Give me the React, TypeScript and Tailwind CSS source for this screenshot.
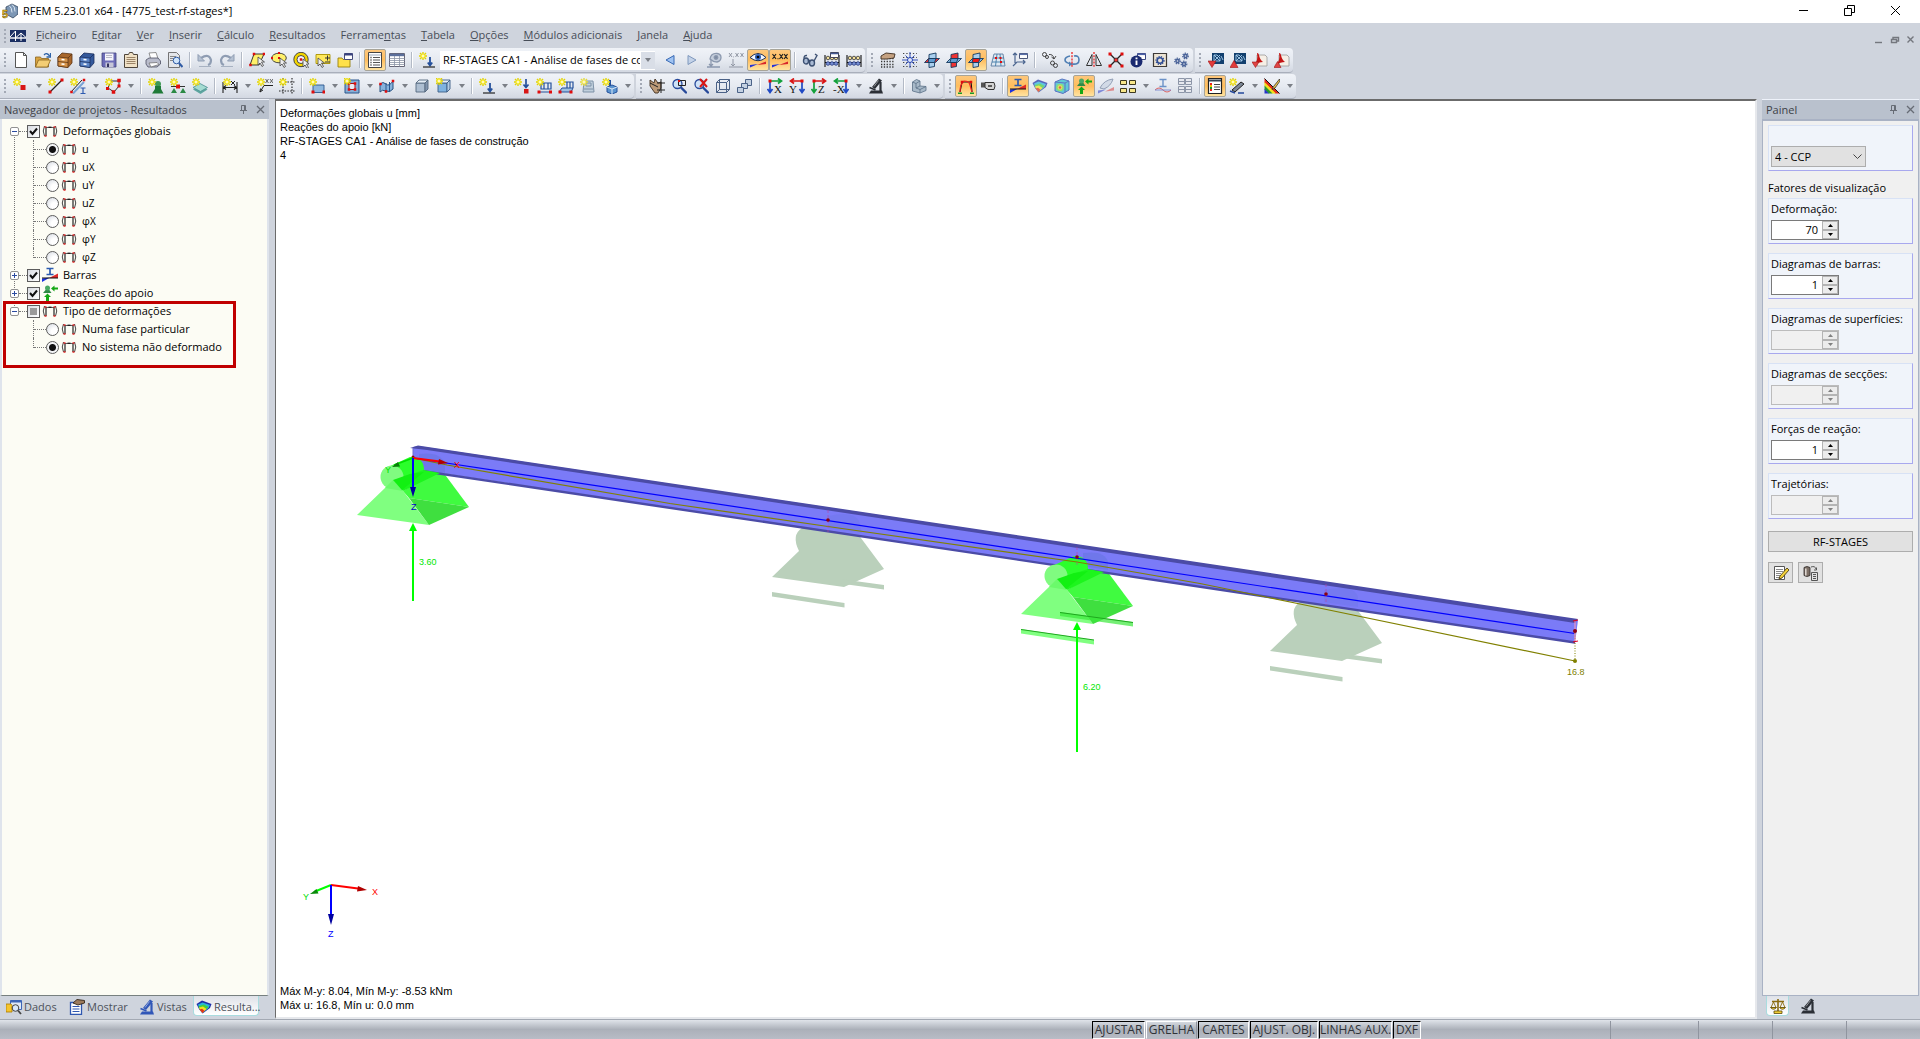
import { useId, useState } from "react";
import type { ReactNode } from "react";

/* ---------- small drawing parts shared by the toolbar icons ---------- */

const Star = ({ x = 4, y = 4 }: { x?: number; y?: number }) => (
  <g>
    <path
      d={`M${x} ${y - 4}v8M${x - 4} ${y}h8M${x - 3} ${y - 3}l6 6M${x + 3} ${y - 3}l-6 6`}
      stroke="#e3d400"
      strokeWidth="1.400"
    />
    <circle cx={x} cy={y} r="2" fill="#fff34d" />
    <circle cx={x} cy={y} r="1" fill="#fffde0" />
  </g>
);

const Node = ({ x, y, s = 3 }: { x: number; y: number; s?: number }) => (
  <rect x={x - s / 2} y={y - s / 2} width={s} height={s} fill="#e00d0d" />
);

const Cabinet = ({ a, b, c }: { a: string; b: string; c: string }) => (
  <g stroke={c} strokeWidth=".8">
    <path d="M1 5l4-4 10 1v9l-4 4.500L1 14z" fill={b} />
    <path d="M1 5l10 1v9.500L1 14z" fill={a} />
    <path d="M11 6l4-4M1 9.500l10 1" fill="none" />
    <path d="M4.500 7.500l3 .3M4.500 12l3 .3" stroke="#fff" strokeWidth="1.400" />
  </g>
);

const Cube = ({ a = "#b9cfe4", b = "#7f9fc0", c = "#3d5f86" }: { a?: string; b?: string; c?: string }) => (
  <g stroke={c} strokeWidth=".9" strokeLinejoin="round">
    <path d="M2 5h9v9H2z" fill={a} />
    <path d="M2 5l3-3h9l-3 3z" fill="#e6eef7" />
    <path d="M11 5l3-3v9l-3 3z" fill={b} />
  </g>
);

const Frame = () => (
  <g fill="none">
    <path d="M2.500 3Q0 8 2.500 13M13.500 3Q16 8 13.500 13" stroke="#444" strokeWidth="1" />
    <path d="M4 13V4.500h8V13" stroke="#111" strokeWidth="1.100" />
    <path d="M4 5q4-3 8 0" stroke="#777" strokeWidth=".8" />
    <path d="M2.500 4h2M11.500 4h2M2.500 13h2M11.500 13h2" stroke="#d22" strokeWidth="1.500" />
  </g>
);

const Axis = ({ dir, name, flip }: { dir: string; name: string; flip?: boolean }) => (
  <g>
    <path
      d={flip ? "M13 3v11M10.500 11l2.500 3.500 2.500-3.500" : "M3 3v11M.5 11L3 14.500 5.500 11"}
      stroke={name === "Z" ? "#12a03a" : "#1f49c4"}
      strokeWidth="1.700"
      fill="none"
    />
    <path
      d={flip ? "M13 3H2M5 .5L1.500 3 5 5.500" : "M3 3h11M11 .5L14.500 3 11 5.500"}
      stroke={dir}
      strokeWidth="1.700"
      fill="none"
    />
    <Node x={flip ? 13 : 3} y={3} />
    <text x={flip ? 0 : 7} y="15" fontSize="11" fill="#111" fontFamily="Liberation Serif, serif">
      {name}
    </text>
  </g>
);

const Planes = ({ h }: { h: number }) => (
  <g stroke="#14395f" strokeWidth=".9" strokeLinejoin="round">
    <path d="M5 2.500l7-1.500v7L5 10z" fill={h === 1 ? "#e33" : "#a9cfee"} />
    <path d="M.5 10.500l4-4h11l-4 4z" fill={h === 0 ? "#e33" : "#86b8e2"} />
    <path d="M5 6.500h7l-1.500 4H4z" fill={h === 2 ? "#f01818" : "#5f9bd0"} />
    <path d="M5 10.500l5.500 0v4L5 15.500z" fill={h === 1 ? "#e33" : "#a9cfee"} />
  </g>
);

const Dxf = ({ up }: { up?: boolean }) => (
  <g>
    <rect x="4" y="1" width="12" height="11" fill="#123f6e" />
    <path d="M6 3l6 6M12 3L6 9M6 3h3l3 3v3H6zM13 4l2 4" stroke="#a8d0ee" fill="none" strokeWidth=".9" />
    <path d={up ? "M0 15.500l4-7 4 7z" : "M0 9h8l-4 6.500z"} fill="#e23b3b" stroke="#a01515" strokeWidth=".6" />
  </g>
);

const Pdf = ({ up }: { up?: boolean }) => (
  <g>
    <path d="M5 3h8l2 2v9H5z" fill="#f6efe6" stroke="#999" strokeWidth=".8" />
    <path d="M5 1c3 0 1 5 6 9-3 0-6 1-9 3 3-3 4-7 3-12z" fill="#c41414" />
    <path d={up ? "M0 15.500l3.500-6 3.500 6z" : "M0 10h7l-3.500 5.500z"} fill="#e04545" stroke="#a01515" strokeWidth=".6" />
  </g>
);

const Beads = () => (
  <g>
    <path d="M1 3v12M15 3v12M1 10.500h14" stroke="#111" strokeWidth="1.100" />
    <g fill="#f2df9a" stroke="#333" strokeWidth=".8">
      <circle cx="4" cy="6" r="1.800" />
      <circle cx="8" cy="6" r="1.800" />
      <circle cx="12" cy="6" r="1.800" />
    </g>
    <g fill="#7790d6" stroke="#22357c" strokeWidth=".8">
      <circle cx="4" cy="11.500" r="1.800" />
      <circle cx="8" cy="11.500" r="1.800" />
      <circle cx="12" cy="11.500" r="1.800" />
    </g>
  </g>
);

const Lens = () => (
  <g>
    <circle cx="6.500" cy="6" r="4.500" fill="#cfe2f7" stroke="#27499a" strokeWidth="1.300" />
    <path d="M10 9.500l5 5" stroke="#27499a" strokeWidth="2.400" strokeLinecap="round" />
  </g>
);

const Gear = ({ x, y, r, c }: { x: number; y: number; r: number; c: string }) => (
  <g fill="none" stroke={c}>
    <circle cx={x} cy={y} r={r} strokeWidth="1.600" />
    <circle cx={x} cy={y} r={r + 1.2} strokeWidth="1.200" strokeDasharray="1.300 1.100" />
  </g>
);

const Cursor = ({ x = 8, y = 6 }: { x?: number; y?: number }) => (
  <path d={`M${x} ${y}v8l2-2 2 3.500 1.500-1-2-3.500h3z`} fill="#eee" stroke="#444" strokeWidth=".8" />
);

const Rainbow = ({ fade }: { fade?: boolean }) => (
  <g opacity={fade ? 0.7 : 1}>
    <path d="M.5 5L6 1.500 15.500 5 14 9 6.500 14.500 3 10z" fill="#1d2fa8" />
    <path d="M2 5.500L6.500 3.500 14 6 12.500 9 6.500 13.800 3.500 9.500z" fill="#28b4dc" />
    <path d="M2.500 7L8 5.500 12.500 8 6.500 13.800 3.500 10z" fill="#43d23a" />
    <path d="M3 8.500L7 7.500 10.500 10 6.500 13.800 4 10.500z" fill="#f6dd20" />
    <path d="M3.500 10.500L6 9.800 8.500 11.800 6.500 14z" fill="#e5301c" />
  </g>
);

const Microscope = ({ c }: { c: string }) => (
  <g>
    <path d="M11 .5l3 2-7 8.500-3-2z" fill={c} />
    <path d="M12.500 4v9" fill="none" stroke={c} strokeWidth="2.200" />
    <path d="M1 15.500l2-3h11l1 3z" fill={c} />
    <path d="M1.500 9.500l6 2.500" stroke={c} strokeWidth="1.500" />
    <path d="M10.500 2.500L6 8.500" stroke="#fff" strokeOpacity=".6" strokeWidth=".8" />
  </g>
);

const Section = () => (
  <g>
    <path d="M4.500 1.500h7M8 1.500v6M4.500 7.500h7" stroke="#2c5bb0" strokeWidth="1.700" fill="none" />
    <path d="M0 15V11.500L8 10.500z" fill="#1b32e0" />
    <path d="M16 6.500v4.500H7z" fill="#e02a2a" />
    <path d="M0 11h16" stroke="#111" strokeWidth="1" />
  </g>
);

const Reaction = () => (
  <g>
    <path d="M1 8l3-3.500h3L9.500 8z" fill="#2f8a46" />
    <circle cx="5.500" cy="3" r="2.500" fill="#4aa864" />
    <path d="M9 3.500l3.500-3v2H16v2h-3.500v2z" fill="#15a815" />
    <path d="M5.500 8.500l3.500 3.500h-2v4H4v-4H2z" fill="#15a815" />
  </g>
);

const icons: Record<string, ReactNode> = {
  new: <path d="M2.500.5h8l3 3v12h-11zM10.500.5v3h3" fill="#fff" stroke="#555" />,
  open: (
    <g>
      <path d="M.5 15V5h5l1 1.500h7V15z" fill="#d9a441" stroke="#8a6420" strokeWidth=".8" />
      <path d="M.5 15l3-7h12l-3 7z" fill="#f3cd74" stroke="#8a6420" strokeWidth=".8" />
      <path d="M9 3q3-3 5.500 1M15.500 1v4h-4" fill="none" stroke="#2d62a8" strokeWidth="1.300" />
    </g>
  ),
  cab: <Cabinet a="#d8944a" b="#a8662a" c="#5a3414" />,
  cabBlue: <Cabinet a="#5d86c8" b="#34599c" c="#1a2f5e" />,
  save: (
    <g>
      <path d="M1 1h14v14H2l-1-1z" fill="#6c6cb8" stroke="#44447e" strokeWidth=".8" />
      <path d="M4 1.500h8.500v7H4z" fill="#f4f4fb" />
      <path d="M5 3.500h6M5 5.500h6" stroke="#aab" strokeWidth=".8" />
      <path d="M4.500 10.500h8V15h-8z" fill="#c6c6d8" />
      <path d="M6 11.500h2V15H6z" fill="#33335e" />
    </g>
  ),
  notes: (
    <g>
      <path d="M1.500 2.500h4l1-2h3l1 2h4v13h-13z" fill="#f0e1c6" stroke="#4e453b" />
      <path d="M3.500 5.500h9M3.500 7.500h9M3.500 9.500h9M3.500 11.500h9" stroke="#9c8468" />
    </g>
  ),
  print: (
    <g>
      <path d="M4 1l7-.5 2 6-7 1z" fill="#fff" stroke="#777" strokeWidth=".8" />
      <path d="M1 8l3-2h9l2.500 3v3L12 15H3l-2-3z" fill="#b9bccb" stroke="#4b4e62" strokeWidth=".8" />
      <path d="M4 11l8-.5 2 2-8 2.500z" fill="#fdfdfd" stroke="#666" strokeWidth=".7" />
    </g>
  ),
  preview: (
    <g>
      <path d="M1.500.5h8l3 3v12h-11z" fill="#e4e6ea" stroke="#666" strokeWidth=".9" />
      <path d="M3 4.500h6M3 6.500h4M3 8.500h3" stroke="#888" />
      <circle cx="9.500" cy="8.500" r="3.300" fill="#cfe4fa" stroke="#2f5ba5" />
      <path d="M12 11l3.500 4" stroke="#2f5ba5" strokeWidth="2" />
    </g>
  ),
  undo: (
    <g fill="none" stroke="#8f9db3">
      <path d="M4 6q8-5 10 2 0 4-3 5" strokeWidth="2.200" />
      <path d="M1 2.500V9h6.500z" fill="#b5c1d2" />
      <path d="M2 14.500h12" stroke="#a8b2c2" />
    </g>
  ),
  redo: (
    <g fill="none" stroke="#8f9db3">
      <path d="M12 6Q4 1 2 8q0 4 3 5" strokeWidth="2.200" />
      <path d="M15 2.500V9H8.500z" fill="#b5c1d2" />
      <path d="M2 14.500h12" stroke="#a8b2c2" />
    </g>
  ),
  selPoly: (
    <g>
      <path d="M5 2h10l-5 11H1z" fill="#fff06a" stroke="#222" strokeWidth=".9" />
      <Node x={5} y={2} s={2.5} /><Node x={15} y={2} s={2.5} /><Node x={1.5} y={13} s={2.5} />
      <Cursor x={9} y={5} />
    </g>
  ),
  selEllipse: (
    <g>
      <ellipse cx="8" cy="6" rx="7.300" ry="4.800" fill="#fff06a" stroke="#333" strokeWidth=".9" />
      <Node x={8} y={1} s={2} /><Node x={1} y={6} s={2} /><Node x={8} y={6} s={2} />
      <Cursor x={9} y={6} />
    </g>
  ),
  selRing: (
    <g>
      <circle cx="8" cy="7.500" r="5.600" fill="#f6f6fa" stroke="#f2d500" strokeWidth="3" />
      <circle cx="8" cy="7.500" r="7.200" fill="none" stroke="#222" strokeWidth=".8" />
      <circle cx="8" cy="7.500" r="4" fill="none" stroke="#222" strokeWidth=".8" />
      <Node x={8} y={7.5} s={2.5} />
      <Cursor x={10} y={7} />
    </g>
  ),
  selPlus: (
    <g>
      <path d="M1 2.500h14v9H1z" fill="#ffe95c" stroke="#a99200" strokeWidth=".9" />
      <path d="M12.500 3.500v5M10 6h5M10 10h5" stroke="#333" />
      <Cursor x={3} y={6} />
    </g>
  ),
  selFolder: (
    <g>
      <path d="M1 15V6h4l1 1.500h7V15z" fill="#ffe14a" stroke="#97810e" strokeWidth=".9" />
      <path d="M7.500 1.500h8v6h-8z" fill="#fff" stroke="#444a7c" />
      <path d="M7.500 2.500h8" stroke="#38427e" strokeWidth="2" />
    </g>
  ),
  list: (
    <g>
      <path d="M1.500.5h13v15h-13z" fill="#fff" stroke="#444" />
      <path d="M2 3h12" stroke="#9aa6b8" strokeWidth="1" />
      <path d="M3.500 5.500h1M3.500 8h1M3.500 10.500h1M3.500 13h1" stroke="#222" strokeWidth="1.400" />
      <path d="M6 5.500h7M6 8h7M6 10.500h7M6 13h7" stroke="#555" />
    </g>
  ),
  table: (
    <g>
      <path d="M.5 1.500h15v13H.5z" fill="#fff" stroke="#667" />
      <path d="M1 3h14" stroke="#5b6f9b" strokeWidth="2.400" />
      <path d="M.5 6.500h15M.5 8.500h15M.5 10.500h15M.5 12.500h15M5.500 4v10.500M10.500 4v10.500" stroke="#8a93a4" strokeWidth=".8" />
    </g>
  ),
  starLoad: (
    <g>
      <Star />
      <path d="M11 5v8M8.800 10.500l2.200 3 2.200-3" stroke="#24509c" strokeWidth="1.800" fill="none" />
      <path d="M4 15h12" stroke="#222" strokeWidth="1.200" />
    </g>
  ),
  left: <path d="M12 3.500v9L4 8z" fill="#9fc3f2" stroke="#3768b4" />,
  right: <path d="M4 3.500v9L12 8z" fill="#c3d2e8" stroke="#7f98bd" />,
  flagDim: (
    <g fill="none" stroke="#8b98ae" strokeWidth="1.300">
      <path d="M4 7q1-6 7-5.500 4 .5 4 4t-4 4.500q-4 0-7-3z" fill="#c5cedc" />
      <circle cx="10" cy="5.500" r="1.800" fill="#7d8ba3" />
      <path d="M5 8v6M3 12l2 2 2-2M1 15h13" />
    </g>
  ),
  xxxDim: (
    <g>
      <path d="M1 1l3 4M4 1L1 5M7.500 1l3 4M10.500 1l-3 4M12.500 1l3 4M15.500 1l-3 4M5.500 4.500v.8" stroke="#9197a4" fill="none" />
      <path d="M5 7v7M3 12l2 2 2-2M1 15h14" stroke="#9197a4" fill="none" />
    </g>
  ),
  eye: (
    <g>
      <path d="M0 5.500Q8-2.500 16 5.500 8 12 0 5.500z" fill="#f2f6fd" stroke="#1b2c52" />
      <circle cx="8" cy="5" r="3" fill="#2d5db5" />
      <circle cx="8" cy="5" r="1.300" fill="#000" />
      <path d="M0 15.500V13l8-1z" fill="#2433d8" />
      <path d="M16 9.500V12l-9 1z" fill="#d8252a" />
    </g>
  ),
  xxx: (
    <g>
      <path d="M.5 2l3.500 5M4 2L.5 7M6 6.300v1M7.500 2L11 7M11 2L7.500 7M12.200 2l3.300 5M15.500 2l-3.300 5" stroke="#222" strokeWidth="1.200" fill="none" />
      <path d="M0 15.500V13l8-1z" fill="#2433d8" />
      <path d="M16 9.500V12l-9 1z" fill="#d8252a" />
    </g>
  ),
  glasses: (
    <g fill="#a9bad4" stroke="#3c5072" strokeWidth="1.400">
      <ellipse cx="4" cy="9" rx="2.500" ry="3" />
      <ellipse cx="10" cy="11" rx="2.500" ry="3" />
      <path d="M6 8.500q1-1 2 1M2 6.500Q2 3 5 3.500M12 9l3-5.500-2-1.500" fill="none" />
    </g>
  ),
  beadsWin: (
    <g>
      <Beads />
      <path d="M6.500.5h8v5h-8z" fill="#fff" stroke="#445" />
      <path d="M6.500 1.500h8" stroke="#445a94" strokeWidth="1.500" />
    </g>
  ),
  beads: <Beads />,
  handGrid: (
    <g>
      <path d="M1 6.500h14M1 9.500h14M1 12.500h14M1 15h14" stroke="#333" strokeWidth="1.300" strokeDasharray="1.300 1.500" />
      <path d="M1 4l5-3 9 1-1 4-7 1-6 0z" fill="#c4a181" stroke="#3c2d20" strokeWidth=".9" />
    </g>
  ),
  snap: (
    <g>
      <path d="M1 1.500h14M1 5.500h14M1 10.500h14M1 14.500h14" stroke="#444" strokeDasharray="1.300 2" />
      <path d="M8 0v16M0 8h16M3.500 3.500l9 9M12.500 3.500l-9 9" stroke="#2443b4" strokeWidth=".9" />
      <circle cx="8" cy="8" r="2.500" fill="#dfe6f8" stroke="#2443b4" />
    </g>
  ),
  plane0: <Planes h={0} />,
  plane1: <Planes h={1} />,
  plane2: <Planes h={2} />,
  mesh: (
    <g>
      <path d="M4 2h9l2 12H1z" fill="#dfe8f1" stroke="#5b7ea3" strokeWidth=".9" />
      <path d="M3 6h11M2 10h13M7 2L5.500 14M10 2l1 12" stroke="#3f7aa8" strokeWidth=".9" />
      <Node x={6} y={6} s={2} /><Node x={11} y={10} s={2} /><Node x={10.5} y={6} s={2} />
    </g>
  ),
  axesWin: (
    <g>
      <path d="M3 1v10M1 14l4-4h8M1 3l2-2 2 2M11 8l2 2-2 2" stroke="#4c6690" fill="none" strokeWidth="1.200" />
      <path d="M7.500 1.500h8v5h-8z" fill="#fff" stroke="#4a5678" />
      <path d="M7.500 2.300h8" stroke="#596fa8" strokeWidth="1.500" />
    </g>
  ),
  move: (
    <g fill="none" stroke="#333" strokeWidth=".9">
      <circle cx="2.500" cy="2.500" r="2" /><circle cx="5" cy="5" r="1.500" />
      <circle cx="10.500" cy="11" r="2" /><circle cx="13.500" cy="13.500" r="2" />
      <path d="M7 2.500q4-.5 5 4M14 4l-2 3-2.500-2" />
    </g>
  ),
  rotate: (
    <g fill="none">
      <path d="M6 4Q1 5 1 8t7 4 7-4-5-4" stroke="#4f7fb4" strokeWidth="1.600" />
      <path d="M5 9.500L8.500 12 5 14.500z" fill="#4f7fb4" />
      <path d="M8 0v16" stroke="#e22" strokeWidth="1.300" strokeDasharray="2 1.200" />
    </g>
  ),
  mirror: (
    <g fill="none" stroke="#333">
      <path d="M6 2.500v11H.5zM10 2.500v11h5.500z" />
      <path d="M8 0v16" stroke="#e22" strokeWidth="1.300" strokeDasharray="2 1.200" />
    </g>
  ),
  cross: (
    <g>
      <path d="M1.500 1.500l13 13M14.500 1.500l-13 13" stroke="#222" strokeWidth="1.400" />
      <Node x={2} y={2} /><Node x={14} y={2} /><Node x={2} y={14} /><Node x={14} y={14} />
      <circle cx="8" cy="8" r="2" fill="#e33" stroke="#222" strokeWidth=".7" />
    </g>
  ),
  info: (
    <g>
      <path d="M7.500 1.500h8v6h-8z" fill="#fff" stroke="#3a4680" />
      <path d="M7.500 2.300h8" stroke="#4c61a8" strokeWidth="1.600" />
      <circle cx="6.500" cy="9.500" r="6" fill="#1a2a70" />
      <path d="M6.500 5.500v1.700M6.500 8.500v4.500" stroke="#fff" strokeWidth="1.900" />
    </g>
  ),
  gearBox: (
    <g>
      <path d="M1.500 1.500h13v13h-13z" fill="#ece4d4" stroke="#3d3a38" strokeWidth="1.200" />
      <Gear x={8} y={8.5} r={2.8} c="#2e4c94" />
    </g>
  ),
  gears: (
    <g>
      <Gear x={3.5} y={9} r={1.6} c="#4b6499" />
      <Gear x={11.5} y={4} r={1.6} c="#4b6499" />
      <Gear x={10} y={12} r={1.6} c="#4b6499" />
    </g>
  ),
  dxfIn: <Dxf />,
  dxfOut: <Dxf up />,
  pdfIn: <Pdf />,
  pdfOut: <Pdf up />,

  nodeNew: <g><Star /><rect x="7.500" y="7" width="5" height="5" fill="#d81616" /></g>,
  lineNew: <g><Star /><path d="M2 14L14 2" stroke="#222" strokeWidth="1.300" /><Node x={2} y={14} /><Node x={14} y={2} /></g>,
  memberNew: (
    <g>
      <Star />
      <path d="M1 14L12 2" stroke="#222" /><path d="M3 15.500L14 4" stroke="#7aa3d6" strokeWidth="2" />
      <path d="M10.500 10h5M13 10v5.500M10.500 15.500h5" stroke="#2e5bb0" strokeWidth="1.200" />
      <Node x={14} y={2} s={2.5} /><Node x={1.5} y={14} s={2.5} />
    </g>
  ),
  polyNew: (
    <g>
      <path d="M6 3h8v5l-5 6-6-4z" fill="none" stroke="#333" />
      <Star />
      <Node x={14} y={2.5} s={3.5} /><Node x={14} y={8} /><Node x={8.5} y={14} s={3.5} /><Node x={2.5} y={10.5} />
    </g>
  ),
  supportNew: (
    <g>
      <circle cx="10" cy="6" r="3" fill="#3f9a56" />
      <path d="M7 8h6v3l2.500 4.500H4L7 11z" fill="#1f7a38" />
      <Star />
    </g>
  ),
  hingeNew: (
    <g>
      <path d="M1 8.500h14" stroke="#333" /><Node x={8} y={8.5} s={4} />
      <path d="M4 10l3 5H1zM13 10l3 5h-6z" fill="#2b8a44" /><Star />
    </g>
  ),
  layerNew: (
    <g>
      <path d="M1 11.500l7-4 7.500 4-7 4.500z" fill="#5ea6a0" /><path d="M1 9.500l7-4 7.500 4-7 4z" fill="#a5dcd2" stroke="#4b8f92" strokeWidth=".8" /><Star />
    </g>
  ),
  dimNew: (
    <g>
      <path d="M1 4v11M15 4v11M1 9.500h14M4 7.500L1.500 9.500 4 11.500M12 7.500l2.500 2-2.500 2" stroke="#222" fill="none" strokeWidth="1.100" />
      <Star x={5} /><path d="M9 3l4 4M13 3L9 7" stroke="#222" />
    </g>
  ),
  noteNew: (
    <g>
      <path d="M3 14l4-6.500h9M3 14l.5-3.500M3 14l3-2" stroke="#222" fill="none" />
      <Star /><path d="M8.500 1l3 4M11.500 1l-3 4M13 1l3 4M16 1l-3 4" stroke="#555" strokeWidth=".9" />
    </g>
  ),
  guideNew: (
    <g>
      <path d="M4 0v16M13 0v16M0 4h16M0 13h16" stroke="#222" strokeWidth="1.100" strokeDasharray="1.500 1.300" />
      <Star />
    </g>
  ),
  surfNew: (
    <g>
      <path d="M4 7h11v7.500H4z" fill="#8fb8de" stroke="#2a568c" strokeWidth=".9" /><Star /><Node x={4} y={14} /><Node x={15} y={14} />
    </g>
  ),
  openNew: (
    <g>
      <path d="M1 2h14v13H1z" fill="#86aed6" stroke="#2a568c" /><path d="M5 5.500h6v6H5z" fill="#e8edf5" stroke="#a11" />
      <Node x={5} y={5.5} s={2.5} /><Node x={11} y={5.5} s={2.5} /><Node x={5} y={11.5} s={2.5} /><Node x={11} y={11.5} s={2.5} />
      <Star x={3} y={3} />
    </g>
  ),
  shellNew: (
    <g>
      <path d="M1 6q3-3 6 0t7-3v8q-3 4-7 2t-6 1z" fill="#86b2dc" stroke="#27507f" /><path d="M7 5v9M10.500 4v10" stroke="#2a568c" />
      <Node x={1.5} y={6} s={2.5} /><Node x={14} y={3} s={2.5} /><Node x={7} y={13.5} s={2.5} />
    </g>
  ),
  solid: <Cube a="#aebfd2" b="#8194ad" c="#56697f" />,
  solidNew: <g><Cube a="#7fb3e0" b="#b3cce4" /><Star x={3} y={3} /></g>,
  nodeLoad: (
    <g>
      <Star /><path d="M12 1v8M9.500 6.500l2.500 3 2.500-3" stroke="#24509c" strokeWidth="1.700" fill="none" /><rect x="10" y="11" width="4.500" height="4.500" fill="#d81616" />
    </g>
  ),
  lineLoad: (
    <g>
      <path d="M5 5h10v6H5zM8 5v6M12 5v6M2 14h13" stroke="#24509c" fill="none" strokeWidth="1.200" /><Star /><Node x={3} y={14} /><Node x={14.5} y={14} />
    </g>
  ),
  surfLoad: (
    <g>
      <path d="M1 14l3-4h11l-2 4z" fill="#9ec0e2" stroke="#24509c" /><path d="M6 4h9v6M9 4v6M12 4v6" stroke="#24509c" fill="none" strokeWidth="1.200" /><Star /><Node x={2} y={14} /><Node x={13} y={14} />
    </g>
  ),
  freeLoad: (
    <g opacity=".75">
      <path d="M4 3h9l1 11H3z" fill="#b7c9d8" stroke="#5d7690" /><path d="M6 5h5v3H6zM4 11h9" stroke="#5d7690" fill="none" /><Star />
    </g>
  ),
  genLoad: (
    <g>
      <path d="M8 2v6" stroke="#24509c" strokeWidth="2" /><path d="M5 9l5-2 5 2v5l-5 2-5-2z" fill="#5b94cf" stroke="#24509c" /><path d="M5 9l5 2 5-2M10 11v5" stroke="#dbe8f6" fill="none" /><Star />
    </g>
  ),
  handMove: (
    <g>
      <path d="M1 2l4 3 1-4 3 4 3-1v6l-3 5H6L1 8z" fill="#bc9a78" stroke="#3f2f20" strokeWidth=".9" />
      <path d="M12 1v14M8 5h8M8 12h8M1 5l8 4" stroke="#222" />
    </g>
  ),
  zoomWin: <g><Lens /><path d="M7.500 2.500h7v5h-7z" fill="none" stroke="#222" /><Node x={8} y={3} s={2} /></g>,
  zoomX: <g><Lens /><path d="M7 1l7 8M14 1L7 9" stroke="#d81616" strokeWidth="2" /></g>,
  box: <g fill="none" stroke="#4b6287"><path d="M1.500 4.500h10v10h-10zM4.500 1.500h10v10h-10zM1.500 4.500l3-3M11.500 4.500l3-3M11.500 14.500l3-3M1.500 14.500l3-3" /></g>,
  boxes: (
    <g fill="#c4d1e2" stroke="#4b6287"><path d="M8.500 1.500h6v6h-6z" /><path d="M4.500 5.500h6v5h-6z" /><path d="M.5 9.500h6v5h-6z" /></g>
  ),
  viewX: <Axis dir="#12a03a" name="X" />,
  viewY: <Axis dir="#d81616" name="Y" flip />,
  viewZ: <Axis dir="#d81616" name="Z" />,
  viewMX: <Axis dir="#12a03a" name="-X" flip />,
  scope: <Microscope c="#2b2f36" />,
  shape: (
    <g stroke="#5a7086" strokeWidth=".8" strokeLinejoin="round">
      <path d="M1.500 4l4-2.500L9 3v5l6 .5v4L9 15l-7.500-2z" fill="#a9bac9" />
      <path d="M1.500 4L5 5.500V10l4 1.500V15M5 5.500L9 3M5 10l4-2M9 11.500l6-3" fill="none" />
    </g>
  ),
  defo: (
    <g>
      <path d="M2 14L4 4h9l1 10" stroke="#111" fill="none" strokeWidth="1.200" />
      <path d="M2 14Q2 6 6 3q5 0 6 4l2 7" stroke="#e22" fill="none" strokeWidth="1.200" />
      <path d="M0 15.500h4M12 15.500h4" stroke="#1a9a2a" strokeWidth="2" />
      <Node x={4} y={4} s={2.5} /><Node x={13} y={4} s={2.5} />
    </g>
  ),
  valve: (
    <g>
      <path d="M1 4.500h5v5H1z" fill="#555" /><path d="M5 4.500h9q2 3.500 0 7H8l-3-2z" fill="#d4d4d4" stroke="#333" /><path d="M8 8h4" stroke="#333" strokeWidth="1.500" />
    </g>
  ),
  section: <Section />,
  rainbow: <Rainbow fade />,
  rainCube: (
    <g opacity=".8">
      <path d="M1 4l7-3 7 2v9l-6 3.500L1 13z" fill="#41c2d0" stroke="#3b57b8" /><circle cx="6" cy="9.500" r="3.800" fill="#7ddb58" /><circle cx="6" cy="9.500" r="2.300" fill="#f0de42" /><circle cx="6" cy="9.500" r="1.200" fill="#e0442c" /><path d="M11 5v10M1 4l10 1 4-2" stroke="#3b57b8" fill="none" />
    </g>
  ),
  reaction: <Reaction />,
  wing: (
    <g opacity=".7">
      <path d="M2 10q4-8 13-9-2 7-9 10z" fill="#c9d3e2" stroke="#6e7f9c" /><path d="M0 15.500v-3l8-1z" fill="#5662d0" /><path d="M16 9v3.500l-9 1z" fill="#d66" />
    </g>
  ),
  panes: (
    <g fill="#f7e68a" stroke="#3c3820"><path d="M.5 2.500h6v4h-6zM9.500 2.500h6v4h-6zM.5 10.500h6v4h-6zM9.500 10.500h6v4h-6z" /></g>
  ),
  sectWave: (
    <g>
      <path d="M4.500 1.500h7M8 1.500v7M4.500 8.500h7" stroke="#6b92c8" strokeWidth="1.400" fill="none" /><path d="M0 12q4-4 8 0t8 0" stroke="#d66" fill="none" /><path d="M0 12h16" stroke="#6b7fd0" strokeWidth=".8" />
    </g>
  ),
  grids: (
    <g fill="#e7e9ef" stroke="#8d96a8"><path d="M1.500.5h6v6h-6zM8.500.5h6v6h-6zM1.500 8.500h6v6h-6zM8.500 8.500h6v6h-6zM1.500 3.500h13M1.500 11.500h13" /></g>
  ),
  report: (
    <g>
      <path d="M1.500.5h13v15h-13z" fill="#fff" stroke="#222" strokeWidth="1.200" /><path d="M2 2.500h12" stroke="#345" strokeWidth="2" />
      <path d="M4 5v2M4 11v2" stroke="#e22" strokeWidth="2" /><path d="M4 7v2" stroke="#f0c000" strokeWidth="2" /><path d="M4 9v2" stroke="#1a9a2a" strokeWidth="2" />
      <path d="M7 6.500h6M7 9h6M7 11.500h6" stroke="#444" />
    </g>
  ),
  magic: (
    <g>
      <path d="M3 12l9-8 3 2-9 8z" fill="#7d8796" stroke="#222" /><path d="M1 13l5 2M9 15h6" stroke="#25489a" strokeWidth="1.400" /><Star />
    </g>
  ),
  colors: (
    <g>
      <path d="M.5.5L15.500 15.500H11L.5 5z" fill="#e22a1a" />
      <path d="M.5 4L12 15.500H8L.5 8z" fill="#f2df1b" />
      <path d="M.5 7.500L8.500 15.500H4.500L.5 11.500z" fill="#2a9a2e" />
      <path d="M.5 11L5 15.500H.5z" fill="#2433c8" />
      <path d="M.5.5L15.500 15.500" stroke="#111" />
      <path d="M15.500 1L9.500 8.500l-1.500 3 3-1.500L16 3z" fill="#e9c34a" stroke="#222" strokeWidth=".7" />
    </g>
  ),

  frame: <Frame />,
  edit: (
    <g>
      <path d="M1.500 1.500h10v13h-10z" fill="#fff" stroke="#555" /><path d="M3 4.500h7M3 6.500h7M3 8.500h5M3 10.500h4M3 12.500h3" stroke="#888" /><path d="M14 3L7 11l-1 3 3-1 7-8z" fill="#f3d23a" stroke="#4d3d10" strokeWidth=".9" />
    </g>
  ),
  dbCopy: (
    <g>
      <path d="M1 2.500q3-2 6 0v8q-3 2-6 0z" fill="#7c6f66" stroke="#2e2a28" strokeWidth=".8" /><path d="M2.800 3.500v7" stroke="#e8e2dc" strokeWidth="1.400" />
      <path d="M8 2q4-1.500 5 2M13.500 5V2.500M13.500 5H11M8.500 7.500h6v8h-6zM10 9.500h3M10 11.500h3M10 13.500h3" fill="none" stroke="#555" />
    </g>
  ),
  data: (
    <g>
      <path d="M4.500 1.500h11v9h-11z" fill="#dfe9f8" stroke="#3d66b8" /><path d="M4.500 2.500h11" stroke="#3d66b8" strokeWidth="2" /><path d="M0 5h5l1 1.500V13H0z" fill="#f6c52e" stroke="#a87a00" strokeWidth=".8" />
      <circle cx="9.500" cy="9" r="3.300" fill="#d8e8fb" stroke="#444" /><path d="M12 11.500l3 3.500" stroke="#444" strokeWidth="1.800" />
    </g>
  ),
  show: (
    <g>
      <path d="M1.500 3.500h11v12h-11z" fill="#fff" stroke="#2f57b0" strokeWidth="1.300" /><path d="M3.500 7.500h7M3.500 10h7M3.500 12.500h7" stroke="#2f57b0" /><path d="M4 4l4-3.500 7.500 1V4L9 6z" fill="#9c7b5d" stroke="#33261a" strokeWidth=".9" />
    </g>
  ),
  scopeBlue: <Microscope c="#3157b8" />,
  rainbowFull: <Rainbow />,
  scales: (
    <g>
      <path d="M8 1v13M2 3.500h12" stroke="#8a6c10" strokeWidth="1.600" /><path d="M3.500 4L1 9.500h5zM12.500 4L10 9.500h5z" fill="none" stroke="#8a6c10" strokeWidth=".9" />
      <path d="M.5 9.500h6q-3 3.500-6 0zM9.500 9.500h6q-3 3.500-6 0zM4 13h8v2.500H4z" fill="#f0cf35" stroke="#5d4a0c" strokeWidth=".8" />
    </g>
  ),
  logo: (
    <g>
      <path d="M4 4l6-3 6 3v7l-5 4-7-4z" fill="#7d97b5" stroke="#33465f" strokeWidth=".8" />
      <path d="M7 2.500q3 2 3 7M10 1.500q3 2 3 7" stroke="#dbe6f2" fill="none" />
      <text x="0" y="15" fontSize="11" fontWeight="700" fill="#f4c62c" stroke="#6b5208" strokeWidth=".5" fontFamily="Liberation Sans, sans-serif">5</text>
    </g>
  ),
  bridge: (
    <g>
      <path d="M0 2h16v12H0z" fill="#1b2f63" />
      <path d="M0 10h16" stroke="#fff" strokeWidth="1.400" />
      <path d="M5.500 3v10M5.500 3L0 9M11 13V5l5 4.500M11 5L6 9.500" stroke="#fff" fill="none" />
    </g>
  ),
};

const Icon = ({ name, className = "h-4 w-4" }: { name: string; className?: string }) => (
  <svg viewBox="0 0 16 16" className={`${className} shrink-0`} fill="none" aria-hidden="true">
    {icons[name]}
  </svg>
);

/* ---------- toolbars ---------- */

const Grip = () => (
  <span className="flex h-full w-2.5 shrink-0 flex-col items-center justify-center gap-0.5 pr-px" aria-hidden="true">
    {[0, 1, 2, 3].map((i) => (
      <span key={i} className="h-0.5 w-0.5 bg-[#a3a9b5]" />
    ))}
  </span>
);

const Caret = () => (
  <svg viewBox="0 0 6 4" className="h-1 w-1.5" aria-hidden="true">
    <path d="M0 0h6L3 4z" fill="#7b7f87" />
  </svg>
);

/* "|" is a separator, "v" a drop-down arrow, a leading "*" marks a pressed button */
const Items = ({ list }: { list: string }) => (
  <>
    {list.split(" ").map((raw, i) => {
      if (raw === "|")
        return (
          <span key={i} className="flex w-2 shrink-0 justify-center" aria-hidden="true">
            <span className="h-4 w-0.5 border-l border-[#b3bac6] bg-white" />
          </span>
        );
      if (raw === "v")
        return (
          <button key={i} type="button" aria-label="Mais opções" className="flex h-5 w-[13px] shrink-0 items-center justify-center">
            <Caret />
          </button>
        );
      const on = raw.startsWith("*");
      const name = on ? raw.slice(1) : raw;
      return (
        <button
          key={i}
          type="button"
          aria-label={name}
          aria-pressed={on}
          className={
            on
              ? "flex h-[22px] w-[22px] shrink-0 items-center justify-center rounded-xs border border-[#a7a498] bg-linear-to-b from-[#fdc77c] via-[#ffbd5c] to-[#ffe3a0]"
              : "flex h-[22px] w-[22px] shrink-0 items-center justify-center"
          }
        >
          <Icon name={name} />
        </button>
      );
    })}
  </>
);

const Bar = ({ children }: { children: ReactNode }) => (
  <div className="flex h-[25px] items-center rounded-r border-b border-[#a9afbb] bg-linear-to-b from-[#f0f3f8] via-[#e6eaf1] to-[#d3d8e2]">
    <Grip />
    {children}
  </div>
);

/* ---------- menu ---------- */

const menu: [string, string, string][] = [
  ["", "F", "icheiro"],
  ["E", "d", "itar"],
  ["", "V", "er"],
  ["", "I", "nserir"],
  ["", "C", "álculo"],
  ["", "R", "esultados"],
  ["Ferrame", "n", "tas"],
  ["", "T", "abela"],
  ["", "O", "pções"],
  ["", "M", "ódulos adicionais"],
  ["", "J", "anela"],
  ["", "A", "juda"],
];

const WindowButtons = () => (
  <div className="flex items-center pr-0.5 text-black">
    {[
      ["Minimizar", "M1 5.500h9"],
      ["Restaurar", "M.5 3.500h7v7h-7zM3.500 3V.5h7v7H8"],
      ["Fechar", "M1 1l9 9M10 1l-9 9"],
    ].map(([label, d]) => (
      <button key={label} type="button" aria-label={label} className="flex h-[21px] w-[46px] items-center justify-center">
        <svg viewBox="0 0 11 11" className="h-[11px] w-[11px]" fill="none" stroke="currentColor" aria-hidden="true">
          <path d={d} />
        </svg>
      </button>
    ))}
  </div>
);

const PanelTitle = ({ children }: { children: ReactNode }) => (
  <div className="flex h-5 shrink-0 items-center gap-2 border-t border-[#eef2fa] bg-[#b9c1cd] pr-1 pl-1 text-[#3d4147]">
    <h2 className="min-w-0 flex-1 truncate">{children}</h2>
    <button type="button" aria-label="Fixar" className="text-[#676c75]">
      <svg viewBox="0 0 9 9" className="h-[9px] w-[9px]" fill="none" stroke="currentColor" aria-hidden="true">
        <path d="M2.500 5V.5h4V5M5.500.5V5M1 5.500h7M4.500 6v3" />
      </svg>
    </button>
    <button type="button" aria-label="Fechar painel" className="text-[#676c75]">
      <svg viewBox="0 0 9 9" className="h-[9px] w-[9px]" fill="none" stroke="currentColor" strokeWidth="1.300" aria-hidden="true">
        <path d="M1 1l7 7M8 1L1 8" />
      </svg>
    </button>
  </div>
);

/* ---------- navigator tree ---------- */

const Expander = ({ open }: { open: boolean }) => (
  <button
    type="button"
    aria-label={open ? "Recolher" : "Expandir"}
    className="z-10 flex h-[9px] w-[9px] shrink-0 items-center justify-center rounded-xs border border-[#919191] bg-white"
  >
    <svg viewBox="0 0 5 5" className="h-[5px] w-[5px]" stroke="#2b4ba0" aria-hidden="true">
      <path d={open ? "M0 2.500h5" : "M0 2.500h5M2.500 0v5"} />
    </svg>
  </button>
);

const Branch = ({
  label,
  icon,
  state,
  open,
  children,
}: {
  label: string;
  icon: string;
  state: "on" | "mixed";
  open: boolean;
  children?: ReactNode;
}) => (
  <li>
    <div className="flex h-[18px] items-center pl-[7px]">
      <Expander open={open} />
      <span className="w-2 border-t border-dotted border-[#777]" />
      <label className="flex items-center">
        <span className="grid h-[13px] w-[13px] place-items-center">
          <input
            type="checkbox"
            defaultChecked={state === "on"}
            ref={(el) => {
              if (el) el.indeterminate = state === "mixed";
            }}
            className="peer col-start-1 row-start-1 h-[13px] w-[13px] appearance-none border border-[#5c5c5c] bg-linear-to-br from-[#d9dce2] to-white"
          />
          {state === "mixed" ? (
            <span className="col-start-1 row-start-1 h-[7px] w-[7px] bg-[#9a9a9a]" />
          ) : (
            <svg viewBox="0 0 9 9" className="invisible col-start-1 row-start-1 h-[9px] w-[9px] peer-checked:visible" fill="none" stroke="#111" strokeWidth="2" aria-hidden="true">
              <path d="M1 4l2.500 3L8 1.500" />
            </svg>
          )}
        </span>
        <Icon name={icon} className="mx-0.5 h-4 w-4" />
        <span className="pl-[3px] whitespace-nowrap">{label}</span>
      </label>
    </div>
    {children && <ul className="ml-[30px]">{children}</ul>}
  </li>
);

const Leaf = ({
  group,
  checked,
  last,
  children,
}: {
  group: string;
  checked: boolean;
  last?: boolean;
  children: ReactNode;
}) => (
  <li className="flex h-[18px] items-center">
    <span className={last ? "h-[10px] self-start border-l border-dotted border-[#777]" : "h-full border-l border-dotted border-[#777]"} />
    <span className="w-3 border-t border-dotted border-[#777]" />
    <label className="flex items-center gap-0.5">
      <input
        type="radio"
        name={group}
        defaultChecked={checked}
        className="h-[13px] w-[13px] appearance-none rounded-full border border-[#5c5c5c] bg-[radial-gradient(circle_at_70%_70%,#fff_30%,#d3d8e0)] checked:bg-[radial-gradient(circle,#111_0_3px,#f4f5f7_4px)]"
      />
      <Icon name="frame" />
      <span className="pl-[3px] whitespace-nowrap">{children}</span>
    </label>
  </li>
);

const deformations = ["", "X", "Y", "Z"];

const Navigator = () => (
  <aside className="flex w-[270px] shrink-0 flex-col pr-px">
    <PanelTitle>Navegador de projetos - Resultados</PanelTitle>
    <div className="min-h-0 flex-1 border-x-2 border-b border-x-[#dfe4ec] border-b-[#77807f] bg-[#fcfcf4] pt-[3px] pl-px">
      <ul className="relative text-black">
        <li aria-hidden="true" className="absolute top-3 left-[11px] h-[180px] border-l border-dotted border-[#777]" />
        <Branch label="Deformações globais" icon="frame" state="on" open>
          {deformations.map((axis, i) => (
            <Leaf key={`u${axis}`} group="deformation" checked={i === 0}>
              u<span className="text-[10px]">{axis}</span>
            </Leaf>
          ))}
          {deformations.slice(1).map((axis, i) => (
            <Leaf key={`phi${axis}`} group="deformation" checked={false} last={i === 2}>
              φ<span className="text-[10px]">{axis}</span>
            </Leaf>
          ))}
        </Branch>
        <Branch label="Barras" icon="section" state="on" open={false} />
        <Branch label="Reações do apoio" icon="reaction" state="on" open={false} />
        <li className="relative">
          <div aria-hidden="true" className="pointer-events-none absolute -top-px left-0 z-20 h-[67px] w-[233px] border-3 border-[#c00000]" />
          <ul>
            <Branch label="Tipo de deformações" icon="frame" state="mixed" open>
              <Leaf group="system" checked={false}>Numa fase particular</Leaf>
              <Leaf group="system" checked last>No sistema não deformado</Leaf>
            </Branch>
          </ul>
        </li>
      </ul>
    </div>
    <div role="tablist" aria-label="Navegador" className="flex h-[23px] shrink-0 items-start pl-1 text-[#4d525a]">
      {[
        ["data", "Dados", "w-[63px]"],
        ["show", "Mostrar", "w-[70px]"],
        ["scopeBlue", "Vistas", "w-[56px]"],
      ].map(([icon, label, w]) => (
        <button key={label} type="button" role="tab" aria-selected={false} className={`${w} flex h-5 items-center gap-0.5 pt-0.5 pl-0.5`}>
          <Icon name={icon} />
          {label}
        </button>
      ))}
      <button
        type="button"
        role="tab"
        aria-selected
        className="flex h-5 w-[66px] items-center gap-0.5 rounded-b border border-t-0 border-[#a9dcdf] bg-linear-to-b from-[#dfe2e8] to-white pt-0.5 pl-0.5"
      >
        <Icon name="rainbowFull" />
        Resulta...
      </button>
    </div>
  </aside>
);

/* ---------- model view ---------- */

const SupportBody = ({ dx, dy }: { dx: number; dy: number }) => (
  <g transform={`translate(${dx} ${dy})`}>
    <path d="M357 515L385 488 393 480 403 491 429 525z" fill="#80ff80" />
    <path d="M403 491L424 478 443 472 469 507 409 498z" fill="#40fb40" />
    <path d="M409 498L469 507 429 525z" fill="#3fdf3f" />
  </g>
);

const SupportHinge = ({ dx, dy }: { dx: number; dy: number }) => (
  <g transform={`translate(${dx} ${dy})`}>
    <path d="M386 468L410 457Q424 457 424 470L402 490 392 480z" fill="#2bff2b" />
    <path d="M393 480L424 470 440 473 403 491z" fill="#1df51d" />
    <circle cx="392" cy="477" r="11.500" fill="#80fb80" />
    <path d="M393 480L385 488 403 491z" fill="#6bfa6b" />
    <path d="M393 480L410 474 424 472 402 490z" fill="#12f012" />
  </g>
);

const GreySupport = ({ dx, dy }: { dx: number; dy: number }) => (
  <g transform={`translate(${dx} ${dy})`} fill="#bad0bb">
    <path d="M357 515L384 489Q376 473 387 466L440 468 469 507 429 525z" />
    <path d="M357 530L429.500 541v4.500L357 534.500zM425 517L469 523v4.500L425 521.500z" />
  </g>
);

const Label = ({ x, y, fill, children }: { x: number; y: number; fill: string; children: ReactNode }) => (
  <text x={x} y={y} fill={fill} fontSize="9" fontFamily="Liberation Sans, Arial, sans-serif">
    {children}
  </text>
);

const Model = () => (
  <svg viewBox="276 101 1479 900" preserveAspectRatio="xMinYMin meet" className="absolute inset-0 h-full w-full" role="img" aria-label="Viga com apoios, deformações e reações">
    <GreySupport dx={415} dy={62} />
    <GreySupport dx={913} dy={136} />
    <SupportBody dx={0} dy={0} />
    <SupportBody dx={664} dy={99} />
    <path d="M1021 629L1094 640v4.500L1021 633.500z" fill="#80ff80" />
    <path d="M1060 612L1133 622v4.500L1060 616z" fill="#3be83b" fillOpacity=".7" />
    <path d="M1021 629.500L1094 640M1060 612.500L1133 622.500" stroke="#1fa81f" />

    <path d="M413 447L418 446 1578 620 1575 643 413 469z" fill="#7b7bf7" />
    <g fill="#5f74d8" fillOpacity=".4">
      <path d="M419 454q22-3 26 10v9l-26-4z" />
      <path d="M828 516q26-6 31 5l3 12-34-5z" fillOpacity=".2" />
      <path d="M1083 553q22-3 25 9v8l-25-4z" />
      <path d="M1324 590q30-6 34 7v10l-34-5z" fillOpacity=".2" />
    </g>
    <path d="M410 448L418 445.500 1578 619 1575 623 427 450z" fill="#4b4ba6" />
    <path d="M422 471L1575 642.500" stroke="#4b4ba6" strokeWidth="2.400" />
    <path d="M413 448v21" stroke="#6e6ecf" />
    <SupportHinge dx={0} dy={0} />
    <SupportHinge dx={664} dy={99} />

    <path d="M413 458L447 465 670 503.500 828 526.500 1077 562 1200 583.500 1300 604 1575 661" stroke="#808000" fill="none" strokeWidth="1.200" />
    <path d="M413 458L1575 633.500" stroke="#0000ff" strokeWidth="1.200" />
    <path d="M1575 633v28" stroke="#808000" strokeDasharray="1 1.500" />
    <circle cx="1575" cy="661" r="2" fill="#808000" />
    <path d="M828 510v22M1077 547v20M1326 584v21" stroke="#c040a0" strokeOpacity=".6" strokeDasharray="3 2" />
    <path d="M1575 621v20" stroke="#ff9ab8" />
    <path d="M1573 621l5-1M1573 642l5-1" stroke="#e00020" strokeWidth="1.200" />
    <g fill="#8b0010">
      <circle cx="828" cy="520" r="1.800" />
      <circle cx="1077" cy="557" r="1.800" />
      <circle cx="1326" cy="594" r="1.800" />
      <circle cx="1575" cy="631" r="2" />
      <circle cx="413" cy="457" r="1.500" />
    </g>

    <path d="M413 530V601M1077 629V752" stroke="#00ff00" strokeWidth="2" />
    <path d="M413 523l4 8h-8zM1077 622l4 8h-8z" fill="#00ff00" />
    <Label x={419} y={565} fill="#00e800">3.60</Label>
    <Label x={1083} y={690} fill="#00e800">6.20</Label>
    <Label x={1567} y={675} fill="#808000">16.8</Label>

    <path d="M413 458L394 465" stroke="#00e000" strokeWidth="1.500" />
    <path d="M392 467l6-5 2 4.500z" fill="#0a7a0a" />
    <path d="M413 458L440 461.500" stroke="#ff0000" strokeWidth="2" />
    <path d="M439 459l9 4-10 1.500z" fill="#b00000" />
    <path d="M413 458V489" stroke="#0000ff" strokeWidth="2" />
    <path d="M410 487h6l-3 10z" fill="#0000a0" />
    <Label x={385} y={473} fill="#00e000">Y</Label>
    <Label x={454} y={468} fill="#ff0000">X</Label>
    <Label x={411} y={510} fill="#0000c8">Z</Label>

    <path d="M331 885L315 891.500" stroke="#00ff00" strokeWidth="2" />
    <path d="M310 894l6.500-5 2 4.500z" fill="#0a8a0a" />
    <path d="M331 885L358 888.500" stroke="#ff0000" strokeWidth="2" />
    <path d="M358 886l9 4-10 1.500z" fill="#b00000" />
    <path d="M331 885V915" stroke="#0000ff" strokeWidth="2" />
    <path d="M328 914h6l-3 11z" fill="#0000a0" />
    <Label x={303} y={900} fill="#00e000">Y</Label>
    <Label x={372} y={895} fill="#ff0000">X</Label>
    <Label x={328} y={937} fill="#0000ff">Z</Label>
  </svg>
);

const View = () => (
  <main className="relative ml-[5px] flex min-w-0 flex-1 flex-col justify-between border-t-2 border-r-2 border-b-2 border-l border-t-[#6b6b6b] border-r-[#e6e8ec] border-b-[#e6e8ec] border-l-[#6b6b6b] bg-white font-['Liberation_Sans',Arial,sans-serif] text-[11px] leading-[14px] text-black">
    <Model />
    <div className="relative pt-[5px] pl-1">
      <p>Deformações globais u [mm]</p>
      <p>Reações do apoio [kN]</p>
      <p>RF-STAGES CA1 - Análise de fases de construção</p>
      <p>4</p>
    </div>
    <div className="relative pb-[5px] pl-1">
      <p>Máx M-y: 8.04, Mín M-y: -8.53 kNm</p>
      <p>Máx u: 16.8, Mín u: 0.0 mm</p>
    </div>
  </main>
);

/* ---------- display factors panel ---------- */

const Box = ({ children }: { children: ReactNode }) => (
  <div className="flex h-[46px] flex-col justify-between border border-t-[#d8e2f5] border-r-[#a8a8ee] border-b-[#a8a8ee] border-l-[#d8e2f5] bg-[#f0f4fa] px-0.5 pt-0.5 pb-[3px]">
    {children}
  </div>
);

const Factor = ({ label, value }: { label: string; value: string | null }) => {
  const id = useId();
  const [v, setV] = useState(value ?? "");
  const off = value === null;
  const step = (d: number) => setV((s) => String(Number(s) + d));
  return (
    <Box>
      <label htmlFor={id} className="leading-4 whitespace-nowrap">{label}</label>
      <div className={off ? "flex h-5 w-[68px] border border-[#bcbcbc]" : "flex h-5 w-[68px] border border-[#7a7a7a]"}>
        <input
          id={id}
          type="text"
          value={v}
          disabled={off}
          onChange={(e) => setV(e.target.value)}
          className="w-[50px] min-w-0 bg-white pr-1 text-right disabled:bg-[#f0f0f0]"
        />
        <span className={off ? "flex flex-1 flex-col text-[#808080]" : "flex flex-1 flex-col text-black"}>
          {[1, -1].map((d) => (
            <button
              key={d}
              type="button"
              disabled={off}
              onClick={() => step(d)}
              aria-label={`${d > 0 ? "Aumentar" : "Diminuir"} ${label}`}
              className="flex flex-1 items-center justify-center border border-[#b4b4b4] bg-[#ececec]"
            >
              <svg viewBox="0 0 5 3" className="h-[3px] w-[5px]" fill="currentColor" aria-hidden="true">
                <path d={d > 0 ? "M0 3h5L2.500 0z" : "M0 0h5L2.500 3z"} />
              </svg>
            </button>
          ))}
        </span>
      </div>
    </Box>
  );
};

const factors: [string, string | null][] = [
  ["Deformação:", "70"],
  ["Diagramas de barras:", "1"],
  ["Diagramas de superfícies:", null],
  ["Diagramas de secções:", null],
  ["Forças de reação:", "1"],
  ["Trajetórias:", null],
];

const Panel = () => (
  <aside className="mr-px ml-[5px] flex w-[157px] shrink-0 flex-col">
    <PanelTitle>Painel</PanelTitle>
    <div className="flex min-h-0 flex-1 flex-col border border-t-2 border-[#a9b2c4] bg-[#f0f0f0] px-[5px] pt-1 text-black">
      <Box>
        <span />
        <div className="grid h-[21px] w-[95px] items-center">
          <select aria-label="Critério" className="col-start-1 row-start-1 h-[21px] w-[95px] appearance-none border border-[#adadad] bg-[#e1e1e1] px-[3px]">
            <option>4 - CCP</option>
          </select>
          <svg viewBox="0 0 9 5" className="pointer-events-none col-start-1 row-start-1 mr-1 h-[5px] w-[9px] justify-self-end" fill="none" stroke="#444" aria-hidden="true">
            <path d="M.5.5l4 4 4-4" />
          </svg>
        </div>
      </Box>
      <h3 className="pt-[9px] pb-0.5 leading-4">Fatores de visualização</h3>
      <div className="flex flex-col gap-[9px]">
        {factors.map(([label, value]) => (
          <Factor key={label} label={label} value={value} />
        ))}
      </div>
      <button type="button" className="mt-3 h-[21px] w-full border border-[#adadad] bg-[#e1e1e1]">RF-STAGES</button>
      <div className="flex gap-[5px] pt-2.5">
        {[["edit", "Editar"], ["dbCopy", "Copiar"]].map(([icon, label]) => (
          <button key={icon} type="button" aria-label={label} className="flex h-[21px] w-[25px] items-center justify-center border border-[#adadad] bg-[#e1e1e1]">
            <Icon name={icon} />
          </button>
        ))}
      </div>
    </div>
    <div role="tablist" aria-label="Painel" className="flex h-[23px] shrink-0 items-start gap-1 pl-1">
      <button type="button" role="tab" aria-selected aria-label="Fatores" className="flex h-5 w-[23px] items-center justify-center rounded-b border border-t-0 border-[#a9dcdf] bg-linear-to-b from-[#dfe2e8] to-white">
        <Icon name="scales" />
      </button>
      <button type="button" role="tab" aria-selected={false} aria-label="Filtro" className="flex h-5 w-[30px] items-center justify-center">
        <Icon name="scope" />
      </button>
    </div>
  </aside>
);

/* ---------- status bar ---------- */

const toggles: [string, boolean, string][] = [
  ["AJUSTAR", true, "w-[53px]"],
  ["GRELHA", false, "w-[51px]"],
  ["CARTES", true, "w-[51px]"],
  ["AJUST. OBJ.", true, "w-[68px]"],
  ["LINHAS AUX.", true, "w-[73px]"],
  ["DXF", true, "w-[28px]"],
];

const StatusBar = () => (
  <footer className="flex h-5 shrink-0 items-end justify-end border-t border-[#a3a9b3] bg-linear-to-b from-[#e0e4ea] via-[#abb0b9] to-[#b8bcc6] text-[#303338]">
    <div className="flex gap-px">
      {toggles.map(([label, pressed, w]) => (
        <button
          key={label}
          type="button"
          aria-pressed={pressed}
          className={`${w} flex h-[18px] items-start justify-center border text-xs leading-4 whitespace-nowrap ${
            pressed ? "border-t-black border-r-white border-b-white border-l-black" : "border-t-white border-r-[#8f949e] border-b-transparent border-l-white"
          }`}
        >
          {label}
        </button>
      ))}
    </div>
    {["w-[190px]", "w-[88px]", "w-[74px]", "w-[74px]", "w-[73px]"].map((w, i) => (
      <span key={i} className={`${w} ${i < 4 ? "border-r border-[#90959f]" : ""} h-[18px]`} />
    ))}
  </footer>
);

export default function App() {
  return (
    <div className="flex h-screen flex-col overflow-hidden bg-[#cfd4dd] font-['Open_Sans','Noto_Sans',sans-serif] text-[11px] leading-4">
      <header className="flex h-[23px] shrink-0 items-start justify-between bg-white pl-0.5 text-black">
        <div className="flex items-center gap-[5px] pt-[3px]">
          <Icon name="logo" />
          <h1>RFEM 5.23.01 x64 - [4775_test-rf-stages*]</h1>
        </div>
        <WindowButtons />
      </header>

      <nav aria-label="Menu principal" className="flex h-[25px] shrink-0 items-center">
        <Grip />
        <Icon name="bridge" />
        <div className="flex flex-1 gap-[15px] pb-px pl-2.5 text-[#474d57]">
          {menu.map(([a, key, b]) => (
            <button key={key + b} type="button">
              {a}
              <span className="underline">{key}</span>
              {b}
            </button>
          ))}
        </div>
        <div className="flex gap-1.5 pt-2 pr-1 text-[#74777e]">
          {[
            ["Minimizar documento", "M1 7.500h7"],
            ["Restaurar documento", "M1.500 4.500h5v3h-5zM3 4V2.500h5.500v3.500H7"],
            ["Fechar documento", "M1.500 1.500l6 6M7.500 1.500l-6 6"],
          ].map(([label, d]) => (
            <button key={label} type="button" aria-label={label}>
              <svg viewBox="0 0 10 9" className="h-[9px] w-2.5" fill="none" stroke="currentColor" strokeWidth="1.400" aria-hidden="true">
                <path d={d} />
              </svg>
            </button>
          ))}
        </div>
      </nav>

      <div className="flex shrink-0 flex-col gap-px">
        <div role="toolbar" aria-label="Ferramentas padrão" className="flex gap-0.5">
          <Bar>
            <Items list="new open cab cabBlue save notes print preview | undo redo | selPoly selEllipse selRing selPlus selFolder | *list table | starLoad" />
            <div className="mr-1 ml-0.5 grid h-[19px] w-[215px] items-center">
              <select aria-label="Caso de carga" className="col-start-1 row-start-1 h-[19px] w-[215px] appearance-none bg-white pr-[15px] pl-[3px] text-black">
                <option>RF-STAGES CA1 - Análise de fases de construção</option>
              </select>
              <span className="pointer-events-none col-start-1 row-start-1 flex h-[17px] w-3.5 items-center justify-center justify-self-end bg-[#d9dee7]">
                <Caret />
              </span>
            </div>
            <Items list="left right flagDim xxxDim *eye *xxx | glasses beadsWin beads" />
          </Bar>
          <Bar>
            <Items list="handGrid snap plane0 plane1 *plane2 mesh axesWin | move rotate mirror cross info gearBox gears" />
          </Bar>
          <Bar>
            <Items list="dxfIn dxfOut pdfIn pdfOut" />
          </Bar>
        </div>
        <div role="toolbar" aria-label="Ferramentas de modelo" className="flex gap-0.5">
          <Bar>
            <Items list="nodeNew v lineNew memberNew v polyNew v | supportNew hingeNew layerNew | dimNew v noteNew guideNew | surfNew v openNew v shellNew v solid solidNew v | starLoad v nodeLoad lineLoad surfLoad freeLoad genLoad v" />
          </Bar>
          <Bar>
            <Items list="handMove zoomWin zoomX box boxes | viewX viewY viewZ viewMX v scope v | shape v" />
          </Bar>
          <Bar>
            <Items list="*defo valve | *section rainbow rainCube *reaction wing panes v sectWave grids | *report magic v colors v" />
          </Bar>
        </div>
      </div>

      <div className="flex min-h-0 flex-1">
        <Navigator />
        <View />
        <Panel />
      </div>

      <StatusBar />
    </div>
  );
}
